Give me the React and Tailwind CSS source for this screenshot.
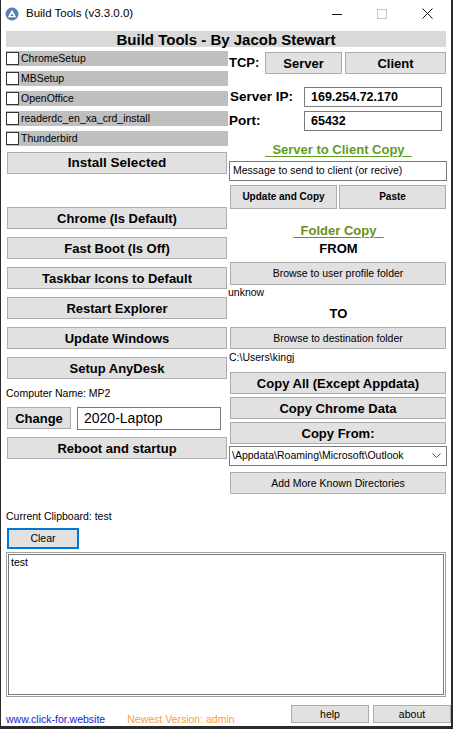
import React from 'react';

const SANS = "font-['Liberation_Sans',Arial,sans-serif]";
const BTN = "flex items-center justify-center bg-[#e1e1e1] border border-[#adadad] text-black leading-none";

const Btn = ({ className = '', children }) => (
  <div className={`${BTN} ${className}`}>{children}</div>
);

const CheckRow = ({ label }) => (
  <div className="flex items-center h-[15px] w-[222px] bg-[#bfbfbf]">
    <div className="w-[13px] h-[13px] bg-white border border-[#333]" />
    <span className="ml-[2px] text-[10.5px] leading-none">{label}</span>
  </div>
);

const AppIcon = () => (
  <svg width="14" height="14" viewBox="0 0 14 14">
    <circle cx="7" cy="7" r="6.5" fill="#5c7db5" />
    <path d="M7 2.8 L11.2 10.2 L2.8 10.2 Z" fill="#fff" strokeLinejoin="round" />
    <path d="M7 6.4 L8.6 9.1 L5.4 9.1 Z" fill="#5c7db5" />
  </svg>
);

const App = () => {
  return (
    <div className={`w-[453px] h-[729px] flex flex-col bg-white border-l border-r-2 border-b-[3px] border-[#2b2b2b] text-black ${SANS}`}>
      {/* title bar */}
      <div className="h-[27px] flex items-center shrink-0">
        <div className="ml-[4px]"><AppIcon /></div>
        <span className="ml-[7px] text-[11.5px] text-black">Build Tools (v3.3.0.0)</span>
        <div className="ml-auto flex items-center">
          <svg width="10" height="10" viewBox="0 0 10 10" className="mr-[35px]">
            <line x1="0" y1="5.5" x2="10" y2="5.5" stroke="#111" strokeWidth="1" />
          </svg>
          <svg width="10" height="10" viewBox="0 0 10 10" className="mr-[35px]">
            <rect x="0.5" y="0.5" width="9" height="9" fill="none" stroke="#c4c4c4" strokeWidth="1" />
          </svg>
          <svg width="11" height="11" viewBox="0 0 11 11" className="mr-[18px]">
            <path d="M0.5 0.5 L10.5 10.5 M10.5 0.5 L0.5 10.5" stroke="#111" strokeWidth="1" />
          </svg>
        </div>
      </div>

      <div className="pl-[5px] flex flex-col">
        {/* header */}
        <div className="mt-[4px] w-[440px] h-[16px] bg-[#d9d9d9] flex items-center justify-center">
          <span className="text-[15px] font-bold leading-none">Build Tools - By Jacob Stewart</span>
        </div>

        <div className="flex mt-[4px]">
          {/* left column */}
          <div className="w-[222px] flex flex-col">
            <div className="flex flex-col gap-[5px]">
              <CheckRow label="ChromeSetup" />
              <CheckRow label="MBSetup" />
              <CheckRow label="OpenOffice" />
              <CheckRow label="readerdc_en_xa_crd_install" />
              <CheckRow label="Thunderbird" />
            </div>
            <Btn className="ml-[1px] w-[220px] h-[22px] mt-[6px] text-[13.5px] font-bold">Install Selected</Btn>
            <div className="ml-[1px] w-[220px] flex flex-col gap-[8px] mt-[33px] text-[13px] font-bold">
              <Btn className="h-[22px]">Chrome (Is Default)</Btn>
              <Btn className="h-[22px]">Fast Boot (Is Off)</Btn>
              <Btn className="h-[22px]">Taskbar Icons to Default</Btn>
              <Btn className="h-[22px]">Restart Explorer</Btn>
              <Btn className="h-[22px]">Update Windows</Btn>
              <Btn className="h-[22px]">Setup AnyDesk</Btn>
            </div>
            <div className="mt-[8px] h-[14px] flex items-center text-[10.5px]">Computer Name: MP2</div>
            <div className="mt-[6px] flex items-start">
              <Btn className="ml-[1px] w-[64px] h-[22px] text-[13px] font-bold">Change</Btn>
              <div className="ml-[6px] w-[144px] h-[23px] border border-[#7a7a7a] bg-white flex items-center pl-[6px] text-[14px]">2020-Laptop</div>
            </div>
            <Btn className="ml-[1px] w-[220px] h-[22px] mt-[7px] text-[13px] font-bold">Reboot and startup</Btn>
          </div>

          {/* right column */}
          <div className="w-[219px] flex flex-col">
            <div className="flex items-center mt-[1px] h-[22px]">
              <span className="ml-[1px] text-[13px] font-bold w-[36px]">TCP:</span>
              <Btn className="w-[77px] h-[22px] text-[13px] font-bold">Server</Btn>
              <Btn className="ml-[3px] w-[101px] h-[22px] text-[13px] font-bold">Client</Btn>
            </div>
            <div className="flex items-center mt-[13px] h-[20px]">
              <span className="ml-[2px] w-[74px] text-[13.5px] font-bold">Server IP:</span>
              <div className="w-[138px] h-[20px] border border-[#7a7a7a] flex items-center pl-[6px] text-[12.5px] font-bold">169.254.72.170</div>
            </div>
            <div className="flex items-center mt-[4px] h-[20px]">
              <span className="ml-[1px] w-[75px] text-[13.5px] font-bold">Port:</span>
              <div className="w-[138px] h-[20px] border border-[#7a7a7a] flex items-center pl-[6px] text-[12.5px] font-bold">65432</div>
            </div>
            <div className="mt-[10px] h-[16px] flex items-center justify-center pl-[2px]">
              <span className="text-[13px] font-bold text-[#5f9e23] underline underline-offset-[2px] whitespace-pre leading-none">  Server to Client Copy  </span>
            </div>
            <div className="mt-[4px] ml-[1px] w-[218px] h-[20px] border border-[#7a7a7a] flex items-center pl-[3px] text-[10.5px]">Message to send to client (or recive)</div>
            <div className="mt-[4px] ml-[2px] flex gap-[2px]">
              <Btn className="w-[107px] h-[24px] text-[10px] font-bold">Update and Copy</Btn>
              <Btn className="w-[107px] h-[24px] text-[10px] font-bold">Paste</Btn>
            </div>
            <div className="mt-[13px] h-[16px] flex items-center justify-center pl-[2px]">
              <span className="text-[13px] font-bold text-[#6b8e23] underline underline-offset-[2px] whitespace-pre leading-none">  Folder Copy  </span>
            </div>
            <div className="mt-[4px] h-[14px] flex items-center justify-center pl-[2px] text-[13px] font-bold">FROM</div>
            <Btn className="mt-[6px] ml-[2px] w-[216px] h-[23px] text-[10.5px]">Browse to user profile folder</Btn>
            <div className="mt-[2px] h-[12px] flex items-center text-[10.5px]">unknow</div>
            <div className="mt-[8px] h-[14px] flex items-center justify-center pl-[2px] text-[13px] font-bold">TO</div>
            <Btn className="mt-[6px] ml-[2px] w-[216px] h-[22px] text-[10.5px]">Browse to destination folder</Btn>
            <div className="mt-[3px] ml-[1px] h-[12px] flex items-center text-[10.5px]">C:\Users\kingj</div>
            <div className="mt-[8px] ml-[2px] w-[216px] flex flex-col gap-[3px] text-[13px] font-bold">
              <Btn className="h-[22px]">Copy All (Except Appdata)</Btn>
              <Btn className="h-[22px]">Copy Chrome Data</Btn>
              <Btn className="h-[22px]">Copy From:</Btn>
            </div>
            <div className="mt-[2px] ml-[1px] w-[218px] h-[20px] border border-[#7a7a7a] flex items-center pl-[2px] text-[10.5px]">
              <span>\Appdata\Roaming\Microsoft\Outlook</span>
              <svg width="9" height="6" viewBox="0 0 9 6" className="ml-auto mr-[5px]">
                <path d="M0.5 0.5 L4.5 4.5 L8.5 0.5" fill="none" stroke="#555" strokeWidth="1" />
              </svg>
            </div>
            <Btn className="mt-[6px] ml-[2px] w-[216px] h-[22px] text-[10.5px]">Add More Known Directories</Btn>
          </div>
        </div>

        {/* clipboard */}
        <div className="mt-[17px] h-[12px] flex items-center text-[10.5px]">Current Clipboard: test</div>
        <div className="mt-[5px] ml-[1px] w-[72px] h-[21px] flex items-center justify-center bg-[#e1e1e1] border-2 border-[#0078d7] text-[10.5px]">Clear</div>
        <div className="mt-[3px] w-[440px] h-[145px] border border-[#a0a0a0] p-[1px]">
          <div className="w-full h-full border border-[#7a7a7a] pl-[2px] pt-[1px] text-[10.5px] leading-[13px]">test</div>
        </div>

        {/* footer */}
        <div className="mt-[8px] flex items-end h-[18px]">
          <span className="text-[10.5px] text-[#2020d0] leading-none mb-[-1px]">www.click-for.website</span>
          <span className="ml-[22px] text-[10.5px] text-[#ff9a3c] leading-none mb-[-1px]">Newest Version: admin</span>
          <Btn className="ml-auto w-[78px] h-[18px] text-[10.5px]">help</Btn>
          <Btn className="ml-[4px] w-[78px] h-[18px] text-[10.5px]">about</Btn>
        </div>
      </div>
    </div>
  );
};

export default App;
